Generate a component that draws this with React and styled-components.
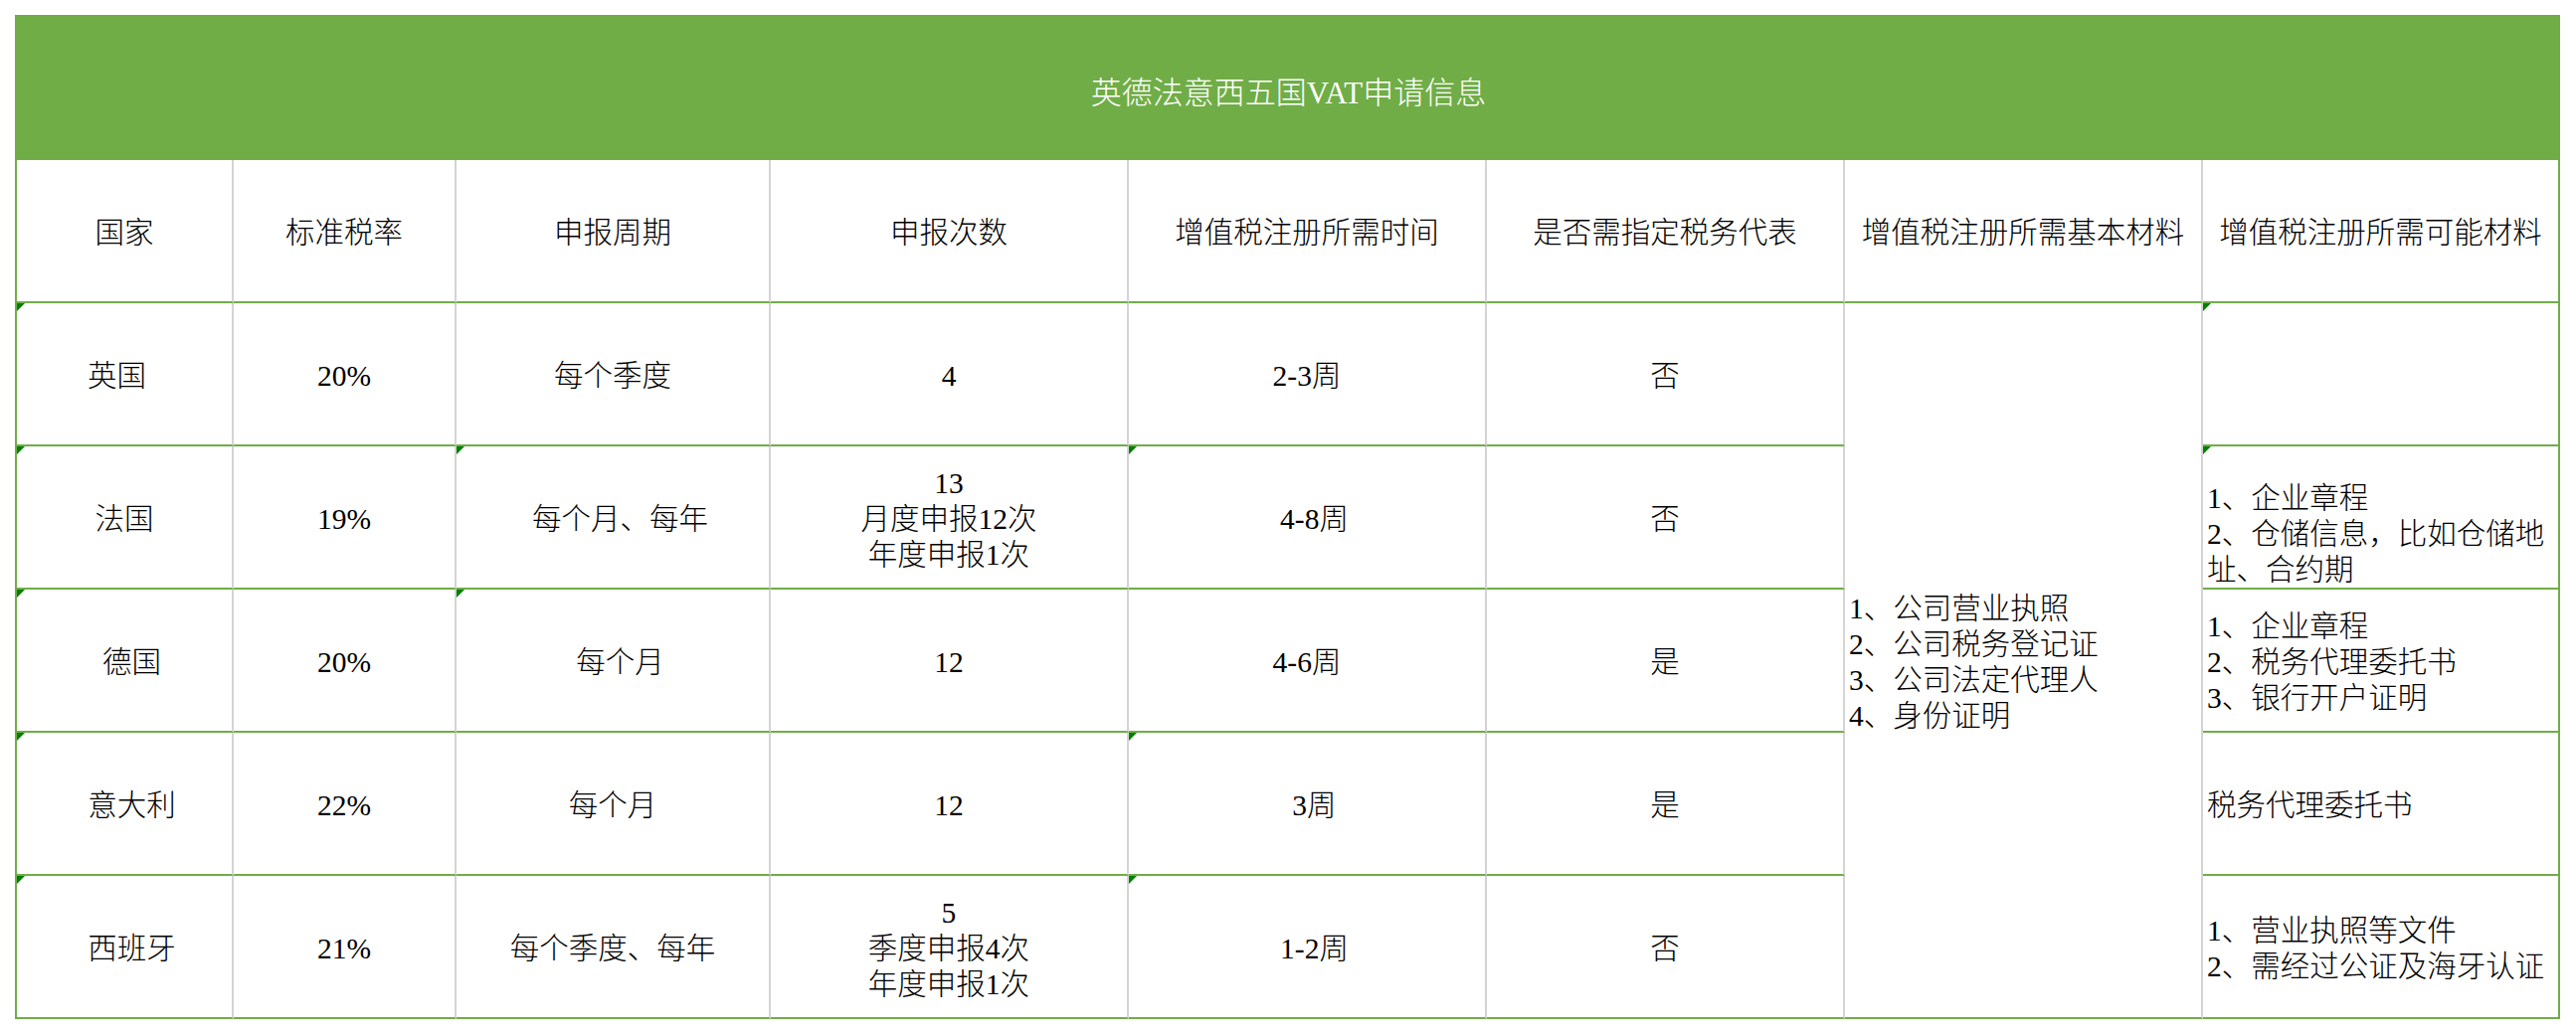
import React from "react";
import styled, { createGlobalStyle, css } from "styled-components";

const GREEN = "#70ad47";
const GRID = "#d4d4d4";
const FLAG = "#008000";

const Global = createGlobalStyle`
  html, body { margin: 0; padding: 0; background: #ffffff; }
  body { font-family: "Liberation Serif", "Noto Sans CJK SC", serif; }
`;

const Page = styled.div`
  padding: 15px 0 0 15px;
`;

const Sheet = styled.div`
  display: grid;
  grid-template-columns: 218px 224px 316px 360px 360px 360px 360px 359px;
  grid-template-rows: 146px repeat(6, 144px);
  width: 2559px;
  box-sizing: border-box;
  border-left: 2px solid ${GREEN};
  font-family: "Liberation Serif", "Noto Sans CJK SC", serif;
  color: #000;
`;

const Title = styled.div`
  grid-column: 1 / -1;
  display: flex;
  align-items: center;
  justify-content: center;
  background: ${GREEN};
  color: #ffffff;
  font-size: 31px;
  font-weight: 300;
  padding-top: 4px;
  box-sizing: border-box;
`;

const Cell = styled.div`
  position: relative;
  display: flex;
  box-sizing: border-box;
  align-items: ${(p) => (p.$valign === "bottom" ? "flex-end" : "center")};
  justify-content: ${(p) => (p.$left ? "flex-start" : "center")};
  text-align: ${(p) => (p.$left ? "left" : "center")};
  padding: ${(p) => (p.$left ? "0 0 0 4px" : "0")};
  padding-left: ${(p) => (p.$lead ? "15px" : undefined)};
  padding-right: ${(p) => (p.$trail ? "15px" : undefined)};
  border-right: 2px solid ${(p) => (p.$last ? GREEN : GRID)};
  border-bottom: 2px solid ${GREEN};
  font-size: 29.5px;
  font-weight: 300;
  line-height: 36px;
  white-space: pre-line;
  ${(p) =>
    p.$span &&
    css`
      grid-column: 7;
      grid-row: 3 / span 5;
    `}
  ${(p) =>
    p.$flag &&
    css`
      &::before {
        content: "";
        position: absolute;
        top: 0;
        left: 0;
        width: 0;
        height: 0;
        border-top: 8px solid ${FLAG};
        border-right: 8px solid transparent;
      }
    `}
`;

const CellText = styled.div`
  padding-top: ${(p) => (p.$valign === "bottom" ? "0" : "4px")};
`;

const headers = [
  "国家",
  "标准税率",
  "申报周期",
  "申报次数",
  "增值税注册所需时间",
  "是否需指定税务代表",
  "增值税注册所需基本材料",
  "增值税注册所需可能材料",
];

const rows = [
  [
    { t: "英国", flag: true, trail: true },
    { t: "20%" },
    { t: "每个季度" },
    { t: "4" },
    { t: "2-3周" },
    { t: "否" },
    null,
    { t: "", flag: true, left: true },
  ],
  [
    { t: "法国", flag: true },
    { t: "19%" },
    { t: "每个月、每年", flag: true, lead: true },
    { t: "13\n月度申报12次\n年度申报1次" },
    { t: "4-8周", flag: true, lead: true },
    { t: "否" },
    null,
    {
      t: "1、企业章程\n2、仓储信息，比如仓储地址、合约期",
      flag: true,
      left: true,
      valign: "bottom",
    },
  ],
  [
    { t: "德国", flag: true, lead: true },
    { t: "20%" },
    { t: "每个月", flag: true, lead: true },
    { t: "12" },
    { t: "4-6周" },
    { t: "是" },
    null,
    { t: "1、企业章程\n2、税务代理委托书\n3、银行开户证明", left: true },
  ],
  [
    { t: "意大利", flag: true, lead: true },
    { t: "22%" },
    { t: "每个月" },
    { t: "12" },
    { t: "3周", flag: true, lead: true },
    { t: "是" },
    null,
    { t: "税务代理委托书", left: true },
  ],
  [
    { t: "西班牙", flag: true, lead: true },
    { t: "21%" },
    { t: "每个季度、每年" },
    { t: "5\n季度申报4次\n年度申报1次" },
    { t: "1-2周", flag: true, lead: true },
    { t: "否" },
    null,
    { t: "1、营业执照等文件\n2、需经过公证及海牙认证", left: true },
  ],
];

const basic = "1、公司营业执照\n2、公司税务登记证\n3、公司法定代理人\n4、身份证明";

export default function App() {
  return (
    <>
      <Global />
      <Page>
        <Sheet>
          <Title>英德法意西五国VAT申请信息</Title>
          {headers.map((h, i) => (
            <Cell key={h} $last={i === headers.length - 1}>
              <CellText>{h}</CellText>
            </Cell>
          ))}
          {rows.map((row, r) =>
            row.map((c, i) => {
              if (c === null) {
                if (r !== 0) return null;
                return (
                  <Cell key={`m${i}`} $span $left>
                    <CellText>{basic}</CellText>
                  </Cell>
                );
              }
              return (
                <Cell
                  key={`${r}-${i}`}
                  $flag={c.flag}
                  $lead={c.lead}
                  $trail={c.trail}
                  $left={c.left}
                  $valign={c.valign}
                  $last={i === row.length - 1}
                >
                  <CellText $valign={c.valign}>{c.t}</CellText>
                </Cell>
              );
            })
          )}
        </Sheet>
      </Page>
    </>
  );
}
